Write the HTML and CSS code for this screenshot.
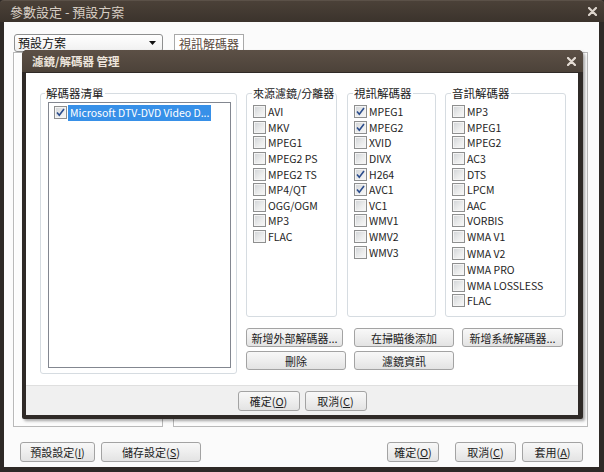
FILE: index.html
```html
<!DOCTYPE html>
<html lang="zh-Hant">
<head>
<meta charset="utf-8">
<title>參數設定 - 預設方案</title>
<link rel="stylesheet" href="styles.css">
</head>
<body>
<div class="win">
  <div class="titlebar">
    <span class="title">參數設定 - 預設方案</span>
    <svg class="close" viewBox="0 0 9 9"><path d="M1 1L8 8M8 1L1 8" stroke="#dcd4cc" stroke-width="2.2" stroke-linecap="round"/></svg>
  </div>
  <div class="client">
    <div class="toprow">
      <div class="combo"><span>預設方案</span><svg class="arrow" viewBox="0 0 7 4"><path d="M0 0H7L3.5 4Z" fill="#111"/></svg></div>
      <div class="tab">視訊解碼器</div>
    </div>
    <div class="panels">
      <div class="panel panel-left"></div>
      <div class="panel panel-right"></div>
    </div>
    <div class="bottom">
      <div class="bgroup">
        <button class="btn w75">預設設定(<u>I</u>)</button>
        <button class="btn w100">儲存設定(<u>S</u>)</button>
      </div>
      <div class="bgroup">
        <button class="btn w52">確定(<u>O</u>)</button>
        <button class="btn w61 ml16">取消(<u>C</u>)</button>
        <button class="btn w61">套用(<u>A</u>)</button>
      </div>
    </div>
  </div>

  <div class="dialog">
    <div class="dtitle">
      <span class="dtitle-text">濾鏡/解碼器 管理</span>
      <svg class="close" viewBox="0 0 9 9"><path d="M1 1L8 8M8 1L1 8" stroke="#e4dcd4" stroke-width="2.2" stroke-linecap="round"/></svg>
    </div>
    <div class="dclient">
      <div class="dmain">
        <fieldset class="gb gb-list">
          <legend>解碼器清單</legend>
          <div class="listbox">
            <div class="litem">
              <span class="box checked"><svg viewBox="0 0 13 13"><path d="M3 6.5L5.3 9.3L10 3" fill="none" stroke="#2b4c8c" stroke-width="1.6"/></svg></span>
              <span class="sel">Microsoft DTV-DVD Video D...</span>
            </div>
          </div>
        </fieldset>
        <div class="rightcol">
          <div class="groups">
            <fieldset class="gb gb-src">
              <legend>來源濾鏡/分離器</legend>
              <div class="cb"><span class="box"></span>AVI</div>
              <div class="cb"><span class="box"></span>MKV</div>
              <div class="cb"><span class="box"></span>MPEG1</div>
              <div class="cb"><span class="box"></span>MPEG2 PS</div>
              <div class="cb"><span class="box"></span>MPEG2 TS</div>
              <div class="cb"><span class="box"></span>MP4/QT</div>
              <div class="cb"><span class="box"></span>OGG/OGM</div>
              <div class="cb"><span class="box"></span>MP3</div>
              <div class="cb"><span class="box"></span>FLAC</div>
            </fieldset>
            <fieldset class="gb gb-vid">
              <legend>視訊解碼器</legend>
              <div class="cb"><span class="box checked"><svg viewBox="0 0 13 13"><path d="M3 6.5L5.3 9.3L10 3" fill="none" stroke="#2b4c8c" stroke-width="1.6"/></svg></span>MPEG1</div>
              <div class="cb"><span class="box checked"><svg viewBox="0 0 13 13"><path d="M3 6.5L5.3 9.3L10 3" fill="none" stroke="#2b4c8c" stroke-width="1.6"/></svg></span>MPEG2</div>
              <div class="cb"><span class="box"></span>XVID</div>
              <div class="cb"><span class="box"></span>DIVX</div>
              <div class="cb"><span class="box checked"><svg viewBox="0 0 13 13"><path d="M3 6.5L5.3 9.3L10 3" fill="none" stroke="#2b4c8c" stroke-width="1.6"/></svg></span>H264</div>
              <div class="cb"><span class="box checked"><svg viewBox="0 0 13 13"><path d="M3 6.5L5.3 9.3L10 3" fill="none" stroke="#2b4c8c" stroke-width="1.6"/></svg></span>AVC1</div>
              <div class="cb"><span class="box"></span>VC1</div>
              <div class="cb"><span class="box"></span>WMV1</div>
              <div class="cb"><span class="box"></span>WMV2</div>
              <div class="cb"><span class="box"></span>WMV3</div>
            </fieldset>
            <fieldset class="gb gb-aud">
              <legend>音訊解碼器</legend>
              <div class="cb"><span class="box"></span>MP3</div>
              <div class="cb"><span class="box"></span>MPEG1</div>
              <div class="cb"><span class="box"></span>MPEG2</div>
              <div class="cb"><span class="box"></span>AC3</div>
              <div class="cb"><span class="box"></span>DTS</div>
              <div class="cb"><span class="box"></span>LPCM</div>
              <div class="cb"><span class="box"></span>AAC</div>
              <div class="cb"><span class="box"></span>VORBIS</div>
              <div class="cb"><span class="box"></span>WMA V1</div>
              <div class="cb gap-above"><span class="box"></span>WMA V2</div>
              <div class="cb"><span class="box"></span>WMA PRO</div>
              <div class="cb"><span class="box"></span>WMA LOSSLESS</div>
              <div class="cb"><span class="box"></span>FLAC</div>
            </fieldset>
          </div>
          <div class="actions">
            <button class="btn a1">新增外部解碼器...</button>
            <button class="btn">在掃瞄後添加</button>
            <button class="btn">新增系統解碼器...</button>
            <button class="btn">刪除</button>
            <button class="btn">濾鏡資訊</button>
          </div>
        </div>
      </div>
      <div class="dfoot">
        <button class="btn w62">確定(<u>O</u>)</button>
        <button class="btn w62">取消(<u>C</u>)</button>
      </div>
    </div>
  </div>
</div>
</body>
</html>
```

FILE: styles.css
```css
* { box-sizing: border-box; }
html, body { margin: 0; padding: 0; }
body {
  width: 604px;
  height: 472px;
  overflow: hidden;
  background: #2e2926;
  font-family: "Noto Sans CJK TC", "Liberation Sans", sans-serif;
  font-size: 11px;
  color: #1e1e1e;
}

.win {
  position: relative;
  width: 604px;
  height: 472px;
  display: flex;
  flex-direction: column;
  background: #2e2926;
}

.titlebar {
  height: 22px;
  flex: none;
  display: flex;
  align-items: center;
  justify-content: space-between;
  padding: 0 7px 0 10px;
  background: linear-gradient(#4b4138, #3b332c);
  border-top: 1px solid #5b5148;
  border-radius: 4px 4px 0 0;
}
.title {
  font-size: 13px;
  line-height: 20px;
  color: #d6cdc3;
}
.close { width: 9px; height: 9px; display: block; }

.client {
  flex: 1;
  margin: 0 5px 5px 4px;
  background: #fbfbfb;
  display: flex;
  flex-direction: column;
  padding: 12px 11px 5px 9px;
}

.toprow {
  height: 18px;
  display: flex;
  align-items: stretch;
  padding-left: 1px;
}
.combo {
  width: 149px;
  display: flex;
  align-items: center;
  justify-content: space-between;
  padding: 0 6px 0 3px;
  border: 1px solid #8e8f8f;
  border-radius: 3px;
  background: linear-gradient(#ffffff, #f0f0f0);
  font-size: 12px;
  line-height: 16px;
  color: #111;
}
.arrow { width: 7px; height: 4px; display: block; }
.tab {
  margin-left: 11px;
  width: 70px;
  border: 1px solid #a9a9a9;
  border-bottom: none;
  background: #fff;
  font-size: 12px;
  line-height: 17px;
  text-align: center;
  color: #5a483c;
}

.panels {
  height: 375px;
  display: flex;
  gap: 10px;
}
.panel {
  border: 1px solid #b9b9b9;
  box-shadow: inset 1px 1px 0 #ffffff;
  background: #fcfcfc;
}
.panel-left { width: 150px; }
.panel-right { flex: 1; }

.bottom {
  margin-top: 15px;
  height: 20px;
  display: flex;
  justify-content: space-between;
  padding: 0 5px 0 7px;
}
.bgroup { display: flex; gap: 6px; }
.bgroup .ml16 { margin-left: 10px; }

.btn {
  height: 20px;
  margin: 0;
  padding: 0;
  border: 1px solid #a3a3a3;
  border-radius: 3px;
  background: linear-gradient(#f8f8f8, #eeeeee 50%, #e3e3e3);
  font-family: "Noto Sans CJK TC", "Liberation Sans", sans-serif;
  font-size: 11px;
  line-height: 17px;
  color: #222;
  text-align: center;
  white-space: nowrap;
}
.btn u { text-underline-offset: 1px; }
.w52 { width: 52px; }
.w61 { width: 61px; }
.w62 { width: 62px; }
.w75 { width: 75px; }
.w100 { width: 100px; }

/* inner dialog window, floating over the settings window */
.dialog {
  position: absolute;
  left: 22px;
  top: 50px;
  width: 561px;
  height: 369px;
  display: flex;
  flex-direction: column;
  background: #2f2a27;
  border-radius: 5px 5px 2px 2px;
  box-shadow: 2px 2px 3px rgba(0, 0, 0, 0.35);
}
.dtitle {
  height: 22px;
  flex: none;
  display: flex;
  align-items: center;
  justify-content: space-between;
  padding: 0 7px 0 10px;
  background: linear-gradient(#5c5046, #4c4239);
  border-radius: 5px 5px 0 0;
}
.dtitle-text {
  font-size: 11.5px;
  font-weight: bold;
  color: #ede5dc;
  line-height: 20px;
}
.dclient {
  flex: 1;
  margin: 1px 5px 4px 4px;
  background: #ffffff;
  display: flex;
  flex-direction: column;
}
.dmain {
  flex: 1;
  display: flex;
  align-items: flex-start;
  gap: 9px;
  padding: 13px 0 0 14px;
}
.dfoot {
  height: 30px;
  flex: none;
  background: #f0f0f0;
  border-top: 1px solid #dfdfdf;
  display: flex;
  justify-content: center;
  gap: 5px;
  padding-top: 5px;
}

.gb {
  margin: 0;
  min-width: 0;
  border: 1px solid #d6dce1;
  border-radius: 3px;
  padding: 4px 6px 0 6px;
}
.gb legend {
  padding: 0 1px;
  margin-left: -1px;
  font-size: 11.5px;
  line-height: 14px;
  color: #1a1a1a;
  white-space: nowrap;
}
.gb-src legend { font-size: 11px; }
.gb-list {
  width: 197px;
  height: 288px;
  padding: 2px 5px 5px 7px;
}
.gb-list legend { margin-left: -3px; }

.listbox {
  height: 266px;
  border: 1px solid #838790;
  background: #fff;
  padding: 1px 0 0 5px;
}
.litem {
  height: 17px;
  display: flex;
  align-items: center;
  gap: 1px;
}
.sel {
  background: #3790e8;
  color: #fff;
  padding: 0 2px;
  line-height: 16px;
  font-size: 10.5px;
}

.rightcol { width: 320px; display: flex; flex-direction: column; }
.groups { display: flex; height: 231px; }
.gb-src { width: 91px; }
.gb-vid { width: 89px; margin-left: 10px; }
.gb-aud { width: 121px; margin-left: 9px; }

.cb {
  height: 15.6px;
  display: flex;
  align-items: center;
  gap: 2px;
  font-size: 10.5px;
  line-height: 13px;
  color: #1e1e1e;
  white-space: nowrap;
}
.gap-above { margin-top: 1.7px; }

.box {
  width: 13px;
  height: 13px;
  flex: none;
  display: block;
  border: 1px solid #8e8f8f;
  background: linear-gradient(135deg, #d0d3d6 0%, #eceded 60%, #f8f8f8 100%);
  box-shadow: inset 0 0 0 1px #f4f4f4;
  position: relative;
}
.box svg {
  position: absolute;
  left: -1px;
  top: -1px;
  width: 13px;
  height: 13px;
}

.actions {
  margin-top: 11px;
  display: grid;
  grid-template-columns: 100px 100px 101px;
  column-gap: 8px;
  row-gap: 4px;
}
.actions .btn { height: 19px; line-height: 16px; }
.actions .a1 { width: 97px; }
```
